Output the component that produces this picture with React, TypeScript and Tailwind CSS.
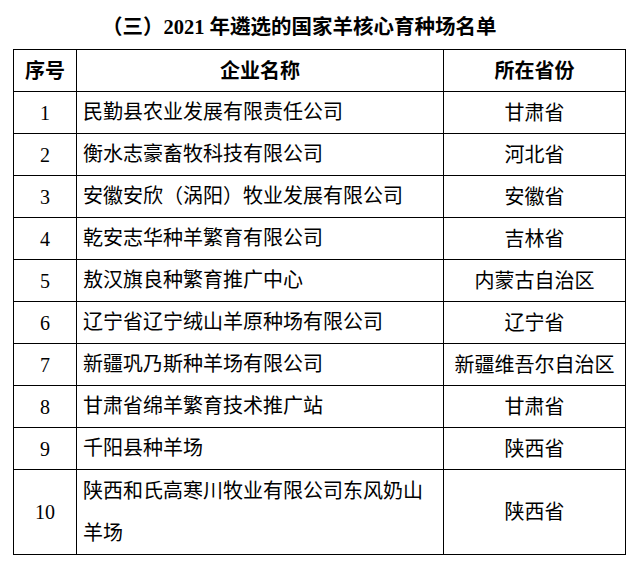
const rows = [
  { no: '1', name: '民勤县农业发展有限责任公司', prov: '甘肃省' },
  { no: '2', name: '衡水志豪畜牧科技有限公司', prov: '河北省' },
  { no: '3', name: '安徽安欣（涡阳）牧业发展有限公司', prov: '安徽省' },
  { no: '4', name: '乾安志华种羊繁育有限公司', prov: '吉林省' },
  { no: '5', name: '敖汉旗良种繁育推广中心', prov: '内蒙古自治区' },
  { no: '6', name: '辽宁省辽宁绒山羊原种场有限公司', prov: '辽宁省' },
  { no: '7', name: '新疆巩乃斯种羊场有限公司', prov: '新疆维吾尔自治区' },
  { no: '8', name: '甘肃省绵羊繁育技术推广站', prov: '甘肃省' },
  { no: '9', name: '千阳县种羊场', prov: '陕西省' },
  { no: '10', name: '陕西和氏高寒川牧业有限公司东风奶山羊场', prov: '陕西省' },
]

export default function App() {
  return (
    <div className="w-[633px] h-[564px] bg-white text-black font-['Liberation_Serif','Noto_Sans_CJK_SC',serif]">
      <div className="pt-[13px] pl-[102px] h-[49px]">
        <h1 className="text-[20.5px] leading-[28px] font-bold whitespace-nowrap">（三）2021 年遴选的国家羊核心育种场名单</h1>
      </div>

      <table className="ml-[13px] w-[612px] table-fixed border-collapse text-[20px]">
        <colgroup>
          <col className="w-[63px]" />
          <col className="w-[367px]" />
          <col className="w-[182px]" />
        </colgroup>
        <thead>
          <tr className="h-[42px]">
            <th className="border border-black font-bold leading-[40px] p-0">序号</th>
            <th className="border border-black font-bold leading-[40px] p-0">企业名称</th>
            <th className="border border-black font-bold leading-[40px] p-0">所在省份</th>
          </tr>
        </thead>
        <tbody>
          {rows.map((r) => (
            <tr key={r.no} className={r.no === '10' ? 'h-[84px]' : 'h-[42px]'}>
              <td className="border border-black text-center leading-[40px] p-0">{r.no}</td>
              <td className={`border border-black text-left pl-[6px] pr-[6px] py-0 ${r.no === '10' ? 'leading-[42px]' : 'leading-[41px]'}`}>{r.name}</td>
              <td className="border border-black text-center leading-[40px] p-0 whitespace-nowrap">{r.prov}</td>
            </tr>
          ))}
        </tbody>
      </table>
    </div>
  )
}
